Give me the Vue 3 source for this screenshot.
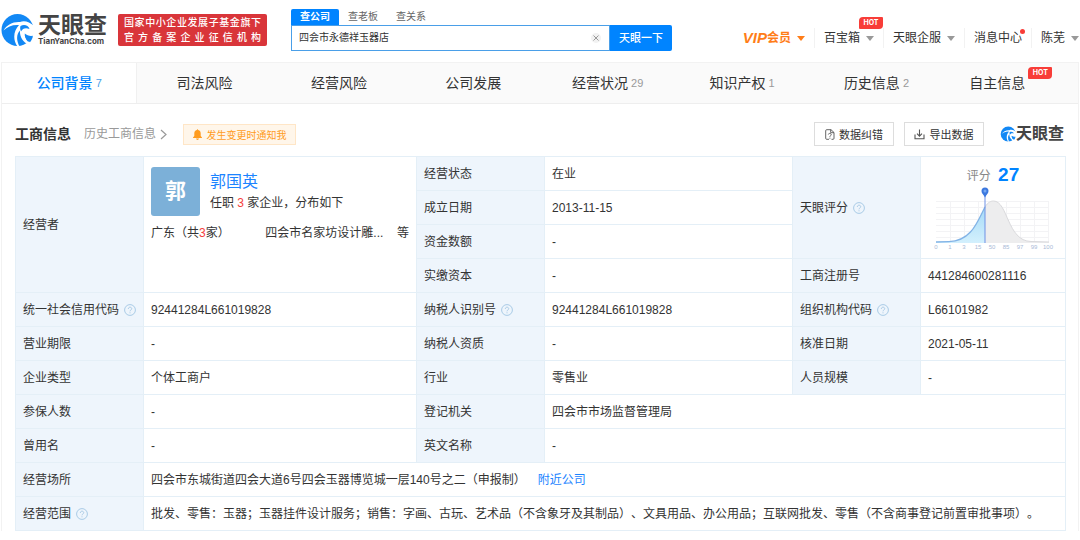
<script setup>
import { ref } from 'vue'

const keyword = ref('四会市永德祥玉器店')
const searchTabs = ['查公司', '查老板', '查关系']
const tabs = [
  { name: '公司背景', count: 7, active: true },
  { name: '司法风险' },
  { name: '经营风险' },
  { name: '公司发展' },
  { name: '经营状况', count: 29 },
  { name: '知识产权', count: 1 },
  { name: '历史信息', count: 2 },
  { name: '自主信息', hot: true },
]
const axis = [0, 1, 3, 15, 50, 85, 97, 99, 100]
</script>

<template>
  <div class="page">
    <svg class="defs" width="0" height="0" aria-hidden="true">
      <symbol id="swirl" viewBox="0 0 34 34">
        <circle cx="17.5" cy="17" r="16" fill="#1288f5" />
        <path d="M3.500 17.500 C7 11.500 13 8.500 20 9 C24.500 7 30 9 34.500 13.500 L34.500 22 C31.500 23.800 27.500 22.800 24.800 20.500 C24.500 24.500 27 28.500 30.500 30.500 L28.500 31.500 C23 29 19.500 23.500 20 17.500 C16.500 21 16 27 19.500 33.500 L17.500 33.500 C12.500 26.500 13.500 18 19 12 C12.500 11.500 7.500 13.500 3.500 17.500 Z" fill="#fff" />
        <path d="M20.500 13 C24 10.800 28.500 12.300 29.500 16 C25.500 14.300 22.500 15.500 21 18.500 C20 16.500 20 14.500 20.500 13 Z" fill="#1288f5" />
        <path d="M24.800 22 C27.500 24.500 31 24.500 33 22.800 C32.500 25.500 31.500 27.500 30 29.300 C27 27.500 25.300 25 24.800 22 Z" fill="#1288f5" />
      </symbol>
      <symbol id="help" viewBox="0 0 12 12">
        <circle cx="6" cy="6" r="5.400" fill="none" stroke="#a9cbe6" stroke-width="1" />
        <path d="M4.300 4.900 C4.300 2.600 7.700 2.700 7.700 4.700 C7.700 6 6 6 6 7.300 M6 8.300 V9.300" fill="none" stroke="#a9cbe6" stroke-width="1" />
      </symbol>
    </svg>

    <header class="top">
      <a class="logo" href="#" aria-label="天眼查">
        <svg width="34" height="34"><use href="#swirl" /></svg>
        <span class="logo-text">
          <b>天眼查</b>
          <small>TianYanCha.com</small>
        </span>
      </a>
      <p class="banner">
        <span>国家中小企业发展子基金旗下</span>
        <span>官方备案企业征信机构</span>
      </p>
      <form class="search" @submit.prevent>
        <div class="search-tabs">
          <button v-for="(t, i) in searchTabs" :key="t" type="button" :class="{ on: i === 0 }">{{ t }}</button>
        </div>
        <div class="search-row">
          <div class="field">
            <input v-model="keyword" type="text" aria-label="公司名称" />
            <button type="button" class="clear" aria-label="清空" @click="keyword = ''">
              <svg width="10" height="10" viewBox="0 0 10 10">
                <circle cx="5" cy="5" r="5" fill="#f2f2f2" />
                <path d="M2.500 2.500 L7.500 7.500 M7.500 2.500 L2.500 7.500" stroke="#999" />
              </svg>
            </button>
          </div>
          <button type="submit" class="go">天眼一下</button>
        </div>
      </form>
      <nav class="user-nav">
        <a href="#" class="vip"><i>VIP</i>会员<span class="caret"></span></a>
        <a href="#">百宝箱<span class="caret"></span><em class="hot over">HOT</em></a>
        <a href="#">天眼企服<span class="caret"></span></a>
        <a href="#">消息中心<span class="dot"></span></a>
        <a href="#" class="me">陈芜<span class="caret"></span></a>
      </nav>
    </header>

    <main class="panel">
      <nav class="tabs">
        <a v-for="t in tabs" :key="t.name" href="#" :class="{ active: t.active }">
          {{ t.name }}<span v-if="t.count" class="count">{{ t.count }}</span><em v-if="t.hot" class="hot">HOT</em>
        </a>
      </nav>

      <section class="content">
        <div class="heading">
          <h2>工商信息</h2>
          <a href="#" class="history">历史工商信息
            <svg width="7" height="11" viewBox="0 0 7 11"><path d="M1 1 L6 5.500 L1 10" fill="none" stroke="#999" stroke-width="1.200" /></svg>
          </a>
          <button type="button" class="notify">
            <svg width="9" height="11" viewBox="0 0 9 11"><path d="M4.500 0 L5.200 1 C7 1.400 7.700 2.700 7.700 4.500 V7 L9 8.500 V9 H0 V8.500 L1.300 7 V4.500 C1.300 2.700 2 1.400 3.800 1 Z M3 9.600 H6 C5.800 11.300 3.200 11.300 3 9.600 Z" fill="#ff9c1f" /></svg>
            发生变更时通知我
          </button>
          <div class="actions">
            <button type="button">
              <svg width="10" height="11" viewBox="0 0 10 11"><path d="M4 10.300 H1.700 Q0.700 10.300 0.700 9.300 V1.700 Q0.700 0.700 1.700 0.700 H6 L9 3.500 V9.300 Q9 10.300 8 10.300 H6.500 M5.700 0.700 V3.700 H9 M3.300 5.400 C3.500 4 6.400 4.100 6.200 5.600 C6 6.700 4.900 6.600 4.900 7.900 M4.900 8.700 V9.700" fill="none" stroke="#555" stroke-width="0.900" /></svg>
              数据纠错
            </button>
            <button type="button">
              <svg width="11" height="11" viewBox="0 0 11 11"><path d="M1 5.500 V9.800 H10 V5.500 M5.500 0.500 V7 M3 4.700 L5.500 7.200 L8 4.700" fill="none" stroke="#555" stroke-width="1.100" /></svg>
              导出数据
            </button>
            <span class="brand"><svg width="16" height="16"><use href="#swirl" /></svg>天眼查</span>
          </div>
        </div>

        <table class="info">
          <colgroup>
            <col class="label" /><col class="wide" /><col class="label" /><col /><col class="label" /><col class="last" />
          </colgroup>
          <tbody>
            <tr>
              <th scope="row" rowspan="4">经营者</th>
              <td rowspan="4" class="owner">
                <div class="person">
                  <span class="avatar">郭</span>
                  <div>
                    <a href="#" class="name">郭国英</a>
                    <p>任职 <span class="red">3</span> 家企业，分布如下</p>
                  </div>
                </div>
                <div class="firms">
                  <span>广东（共<span class="red">3</span>家）</span>
                  <span class="firm">四会市名家坊设计雕...</span>
                  <span>等</span>
                </div>
              </td>
              <th scope="row">经营状态</th>
              <td>在业</td>
              <th scope="row" rowspan="3">天眼评分<svg class="help"><use href="#help" /></svg></th>
              <td rowspan="3" class="score">
                <p class="score-line">评分 <b>27</b></p>
                <svg class="chart" viewBox="0 0 122 66" role="img" aria-label="评分分布">
                  <defs>
                    <linearGradient id="fill" x1="0" y1="0" x2="0" y2="1">
                      <stop offset="0" stop-color="#a5daf7" />
                      <stop offset="1" stop-color="#d3f0fd" />
                    </linearGradient>
                  </defs>
                  <path d="M4 14.500 H117 M4 20.500 H117 M4 26.500 H117 M4 32.500 H117 M4 38.500 H117 M4 44.500 H117 M4 50.500 H117 M18.500 14 V56 M32.500 14 V56 M46.500 14 V56 M74.500 14 V56 M88.500 14 V56 M102.500 14 V56 M116.500 14 V56" stroke="#f3f3f5" fill="none" />
                  <path d="M53 56 V20 C56 15 59 14 61.500 14 C76 14 75 54 99 54.500 L117 55 V56 Z" fill="#ededee" />
                  <path d="M53 20 C56 15 59 14 61.500 14 C76 14 75 54 99 54.500 L117 55" fill="none" stroke="#d9d9dc" />
                  <path d="M4 55 L17 54.700 C40 54 46 33 53 20 V56 H4 Z" fill="url(#fill)" />
                  <path d="M4 55 L17 54.700 C40 54 46 33 53 20" fill="none" stroke="#82b3e6" stroke-width="1.300" />
                  <path d="M53 8 V56" stroke="#6f91e5" />
                  <path d="M53 10.500 C51.500 7.500 49.500 6.500 49.500 4 A3.500 3.500 0 0 1 56.500 4 C56.500 6.500 54.500 7.500 53 10.500 Z" fill="#3c78df" />
                  <circle cx="53" cy="4" r="1.500" fill="#75a8f2" />
                  <text v-for="(n, i) in axis" :key="n" :x="4 + i * 14" y="62">{{ n }}</text>
                </svg>
              </td>
            </tr>
            <tr>
              <th scope="row">成立日期</th>
              <td>2013-11-15</td>
            </tr>
            <tr>
              <th scope="row">资金数额</th>
              <td>-</td>
            </tr>
            <tr>
              <th scope="row">实缴资本</th>
              <td>-</td>
              <th scope="row">工商注册号</th>
              <td>441284600281116</td>
            </tr>
            <tr>
              <th scope="row">统一社会信用代码<svg class="help"><use href="#help" /></svg></th>
              <td>92441284L661019828</td>
              <th scope="row">纳税人识别号<svg class="help"><use href="#help" /></svg></th>
              <td>92441284L661019828</td>
              <th scope="row">组织机构代码<svg class="help"><use href="#help" /></svg></th>
              <td>L66101982</td>
            </tr>
            <tr>
              <th scope="row">营业期限</th>
              <td>-</td>
              <th scope="row">纳税人资质</th>
              <td>-</td>
              <th scope="row">核准日期</th>
              <td>2021-05-11</td>
            </tr>
            <tr>
              <th scope="row">企业类型</th>
              <td>个体工商户</td>
              <th scope="row">行业</th>
              <td>零售业</td>
              <th scope="row">人员规模</th>
              <td>-</td>
            </tr>
            <tr>
              <th scope="row">参保人数</th>
              <td>-</td>
              <th scope="row">登记机关</th>
              <td colspan="3">四会市市场监督管理局</td>
            </tr>
            <tr>
              <th scope="row">曾用名</th>
              <td>-</td>
              <th scope="row">英文名称</th>
              <td colspan="3">-</td>
            </tr>
            <tr>
              <th scope="row">经营场所</th>
              <td colspan="5">四会市东城街道四会大道6号四会玉器博览城一层140号之二（申报制）<a href="#" class="near">附近公司</a></td>
            </tr>
            <tr>
              <th scope="row">经营范围<svg class="help"><use href="#help" /></svg></th>
              <td colspan="5">批发、零售：玉器；玉器挂件设计服务；销售：字画、古玩、艺术品（不含象牙及其制品）、文具用品、办公用品；互联网批发、零售（不含商事登记前置审批事项）。</td>
            </tr>
          </tbody>
        </table>
      </section>
    </main>
  </div>
</template>

<style>
body {
  background: #fff;
}
</style>

<style scoped>
.page {
  font: 12px/18px "Liberation Sans", "Noto Sans CJK SC", sans-serif;
  color: #333;
  text-spacing-trim: space-all;
}
.page *,
.page *::before {
  box-sizing: border-box;
}
.defs {
  position: absolute;
}
a {
  color: inherit;
  text-decoration: none;
}
p,
h2 {
  margin: 0;
}
button {
  font-family: inherit;
  margin: 0;
  padding: 0;
  border: 0;
  background: none;
  cursor: pointer;
}

/* top bar */
.top {
  display: flex;
  align-items: flex-start;
  height: 62px;
}
.logo {
  display: flex;
  gap: 4px;
  padding-top: 13px;
}
.logo-text {
  display: flex;
  flex-direction: column;
  width: 70px;
  color: #444;
}
.logo-text b {
  font-size: 23px;
  line-height: 24px;
}
.logo-text small {
  font: bold 8px/9px Inter, sans-serif;
}
.banner {
  display: flex;
  flex-direction: column;
  width: 149px;
  margin: 14px 0 0 10px;
  padding: 1px 6px;
  border-radius: 2px;
  background: #d9353a;
  color: #fff;
  font-size: 10px;
  line-height: 15px;
  font-weight: 500;
  white-space: nowrap;
}
.banner span {
  text-align: justify;
  text-align-last: justify;
}
.search {
  width: 381px;
  margin: 9px 0 0 24px;
}
.search-tabs {
  display: flex;
}
.search-tabs button {
  width: 48px;
  height: 16px;
  font-size: 10px;
  line-height: 16px;
  color: #666;
}
.search-tabs .on {
  border-radius: 2px 2px 0 0;
  background: #0084ff;
  color: #fff;
  font-weight: bold;
}
.search-row {
  display: flex;
  height: 26px;
}
.field {
  display: flex;
  flex: 1;
  align-items: center;
  padding: 0 8px 0 7px;
  border: 1px solid #4a9fe8;
}
.field input {
  flex: 1;
  min-width: 0;
  padding: 0;
  border: 0;
  outline: 0;
  color: #333;
  font: inherit;
  font-size: 10px;
}
.clear {
  display: flex;
}
.go {
  width: 62px;
  border-radius: 0 2px 2px 0;
  background: #0084ff;
  color: #fff;
  font-size: 11px;
  line-height: 18px;
  font-weight: 500;
}
.user-nav {
  display: flex;
  margin-left: auto;
  padding-top: 28px;
  white-space: nowrap;
}
.user-nav a {
  position: relative;
  display: flex;
  align-items: center;
  height: 20px;
  padding: 0 9px;
  border-right: 1px solid #f2f2f2;
}
.user-nav .me {
  padding-right: 1px;
  border-right: 0;
}
.user-nav .vip {
  color: #ff7d18;
  font-weight: bold;
}
.vip i {
  font-size: 15px;
}
.caret {
  margin-left: 6px;
  border: 4px solid transparent;
  border-top: 5px solid #999;
  border-bottom: 0;
}
.vip .caret {
  border-top-color: #ff7d18;
}
.hot {
  width: 24px;
  border-radius: 4px 1px 4px 1px;
  background: #f83d38;
  color: #fff;
  font: bold 7px/12px Inter, sans-serif;
  text-align: center;
}
.over {
  position: absolute;
  top: -11px;
  right: 0;
}
.dot {
  position: absolute;
  top: 1px;
  right: 6px;
  width: 5px;
  height: 5px;
  border-radius: 50%;
  background: #f83d38;
}

/* section tabs */
.panel {
  margin: 0 1px;
  border: 1px solid #f2f2f2;
  border-width: 1px 1px 0;
}
.tabs {
  display: flex;
  height: 41px;
  border-bottom: 1px solid #eee;
  background: #fafafa;
}
.tabs a {
  display: flex;
  flex: 1;
  align-items: center;
  justify-content: center;
  font-size: 14px;
  line-height: 20px;
}
.tabs .active {
  background: #fff;
  border-right: 1px solid #f0f0f0;
  color: #0084ff;
  font-weight: 500;
}
.count {
  margin-left: 3px;
  font-size: 11px;
  font-weight: normal;
  color: #999;
}
.active .count {
  color: #4a9fe8;
}
.tabs .hot {
  align-self: flex-start;
  margin: 4px 0 0 3px;
}

/* registration info */
.content {
  padding: 18px 12px 0 13px;
}
.heading {
  display: flex;
  align-items: center;
  height: 24px;
  margin-bottom: 10px;
}
.heading h2 {
  font-size: 14px;
  line-height: 20px;
}
.history {
  display: flex;
  align-items: center;
  gap: 4px;
  margin-left: 13px;
  color: #999;
}
.notify {
  display: flex;
  align-items: center;
  justify-content: center;
  gap: 5px;
  width: 113px;
  height: 21px;
  margin-left: 16px;
  border: 1px solid #ffe6c7;
  background: #fff6ea;
  color: #ff9c1f;
  font-size: 10px;
}
.actions {
  display: flex;
  align-items: center;
  gap: 10px;
  margin-left: auto;
}
.actions button {
  display: flex;
  align-items: center;
  justify-content: center;
  gap: 4px;
  width: 80px;
  height: 24px;
  border: 1px solid #ddd;
  color: #333;
  font-size: 11px;
}
.brand {
  display: flex;
  align-items: center;
  margin: 0 2px 0 6px;
  color: #444;
  font-size: 16px;
  font-weight: bold;
}
.info {
  width: 100%;
  table-layout: fixed;
  border-collapse: collapse;
}
.label {
  width: 128px;
}
.wide {
  width: 26%;
}
.last {
  width: 145px;
}
.info th,
.info td {
  height: 34px;
  padding: 0 7px;
  border: 1px solid #e4eff7;
  text-align: left;
  font-weight: normal;
  white-space: nowrap;
}
.info th {
  background: #eef5fc;
}
.help {
  width: 12px;
  height: 12px;
  margin-left: 5px;
  vertical-align: -2px;
}
.info .owner {
  padding-top: 10px;
  vertical-align: top;
}
.person {
  display: flex;
  gap: 10px;
}
.avatar {
  width: 49px;
  height: 49px;
  border-radius: 3px;
  background: #7cb0d8;
  color: #fff;
  font-size: 21px;
  line-height: 48px;
  font-weight: bold;
  text-align: center;
}
.name {
  display: block;
  padding-top: 5px;
  font-size: 16px;
  line-height: 20px;
  color: #1c84ff;
}
.person p {
  padding-top: 2px;
}
.red {
  color: #f5403c;
}
.firms {
  display: flex;
  padding-top: 8px;
}
.firm {
  margin: 0 auto;
  padding-left: 22px;
}
.info .score {
  padding: 0;
  text-align: center;
  vertical-align: top;
}
.score-line {
  padding-top: 7px;
  line-height: 22px;
  color: #888;
}
.score-line b {
  margin-left: 4px;
  color: #0084ff;
  font-size: 19px;
  vertical-align: -1px;
}
.chart {
  display: block;
  width: 122px;
  height: 66px;
  margin: 0 auto;
}
.chart text {
  fill: #a9bad6;
  font-size: 6px;
  text-anchor: middle;
}
.near {
  margin-left: 12px;
  color: #1c84ff;
}
</style>
